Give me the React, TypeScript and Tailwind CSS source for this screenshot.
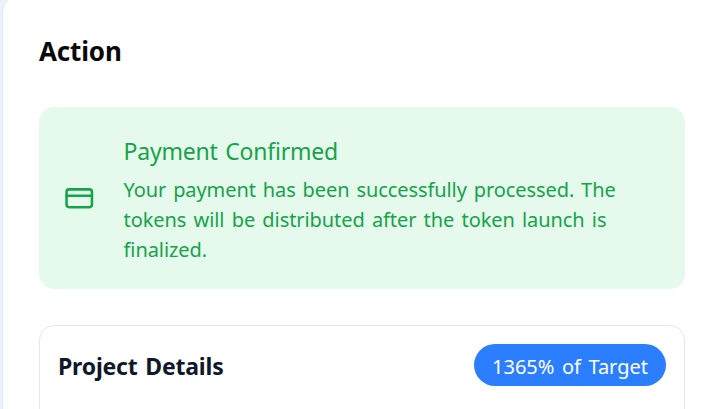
import React from 'react';
import { CreditCard } from 'lucide-react';

function PaymentAlert() {
  return (
    <div className="flex h-[182px] items-center gap-[29px] rounded-[15px] bg-[#e5f9ec] pl-[25px] text-[#16a34a]">
      <CreditCard className="size-[30.5px] shrink-0" strokeWidth={2} />
      <div className="pt-[3px] whitespace-nowrap">
        <h3 className="text-[23px] leading-[32px] tracking-[-0.22px] [word-spacing:2px]">Payment Confirmed</h3>
        <p className="mt-2 text-[20px] leading-[30px] tracking-[-0.08px]">
          <span className="block [word-spacing:1.8px]">Your payment has been successfully processed. The</span>
          <span className="block [word-spacing:2.15px]">tokens will be distributed after the token launch is</span>
          <span className="block">finalized.</span>
        </p>
      </div>
    </div>
  );
}

function ProjectDetails() {
  return (
    <div className="mt-9 h-[200px] rounded-[15px] border border-gray-200 px-[18px] pt-[18px]">
      <div className="flex items-center justify-between">
        <h2 className="pt-[3px] text-[23px] font-bold tracking-[-0.2px] text-[#0f172a] [word-spacing:2px]">
          Project Details
        </h2>
        <span className="flex h-[42px] w-[192px] items-center justify-center rounded-full bg-[#2b7fff] pt-[3px] text-[20px] text-white [word-spacing:2.3px]">
          1365% of Target
        </span>
      </div>
    </div>
  );
}

export default function App() {
  return (
    <div className="h-screen overflow-hidden bg-[#edf1fb] font-['Noto_Sans',sans-serif]">
      {/* Panel runs past the right and bottom edges */}
      <div className="-mt-[7px] ml-[2px] h-[440px] w-[760px] rounded-[20px] border border-[#e2e8f0] bg-white pl-9">
        <div className="w-[646px]">
          <h1 className="pt-[39px] text-[26px] leading-9 font-bold tracking-[-0.15px] text-[#09090b]">Action</h1>
          <div className="mt-[38px]">
            <PaymentAlert />
          </div>
          <ProjectDetails />
        </div>
      </div>
    </div>
  );
}
